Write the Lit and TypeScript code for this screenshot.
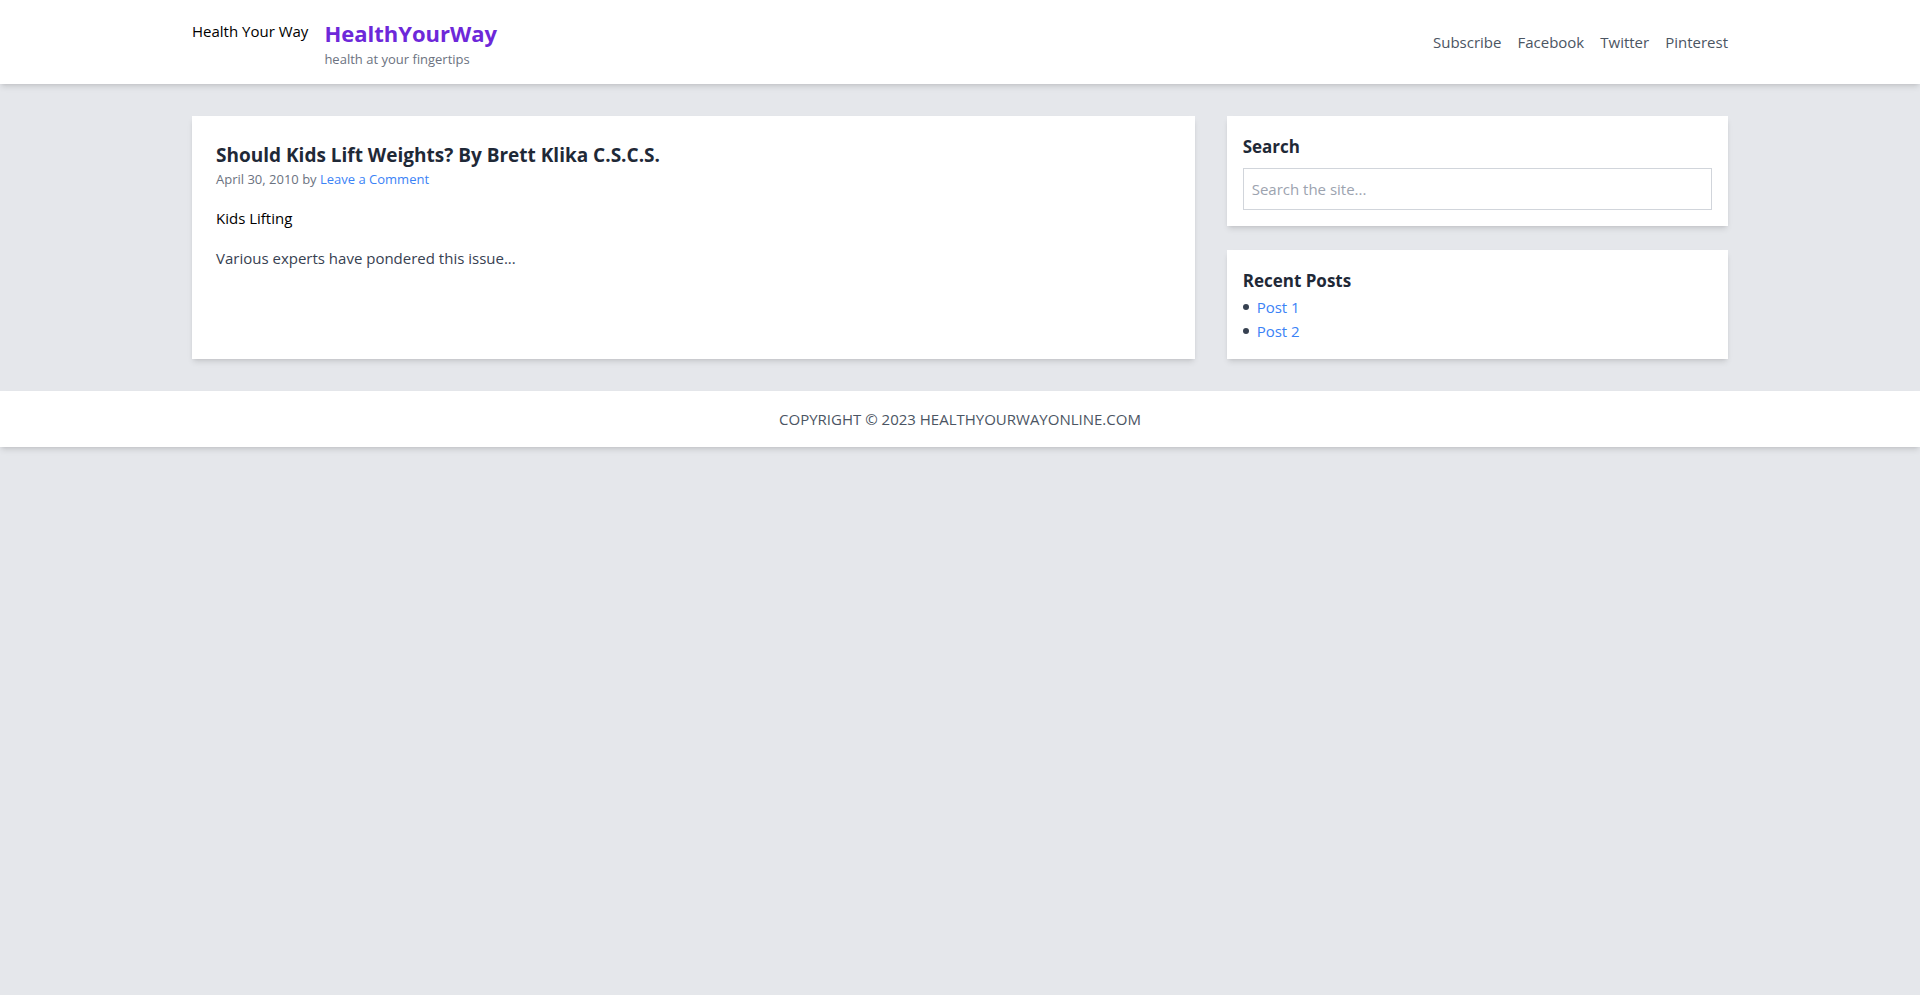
import { LitElement, html, css } from "lit";
import { customElement } from "lit/decorators.js";

interface NavItem {
  label: string;
  href: string;
}

const NAV: NavItem[] = [
  { label: "Subscribe", href: "#subscribe" },
  { label: "Facebook", href: "#facebook" },
  { label: "Twitter", href: "#twitter" },
  { label: "Pinterest", href: "#pinterest" },
];

const POSTS: NavItem[] = [
  { label: "Post 1", href: "#post-1" },
  { label: "Post 2", href: "#post-2" },
];

@customElement("app-root")
export class AppRoot extends LitElement {
  static styles = css`
    :host {
      display: block;
      min-height: 100vh;
      background: #e5e7eb;
      color: #000;
      font-family: "Segoe UI", "Open Sans", "Noto Sans", sans-serif;
      font-size: 15px;
      line-height: 24px;
    }
    *,
    *::before {
      box-sizing: border-box;
    }
    h1,
    h2,
    h3,
    p,
    ul {
      margin: 0;
      padding: 0;
    }
    a {
      color: #3b82f6;
      text-decoration: none;
    }
    .bar,
    .card {
      background: #fff;
      box-shadow: 0 4px 6px -1px rgb(0 0 0 / 0.1),
        0 2px 4px -2px rgb(0 0 0 / 0.1);
    }
    .bar {
      padding: 16px 0;
    }
    .container {
      width: 100%;
      max-width: 1536px;
      margin: 0 auto;
    }
    .top {
      display: flex;
      align-items: center;
      justify-content: space-between;
    }
    .brand,
    .nav {
      display: flex;
      gap: 16px;
    }
    .logo {
      line-height: 30px;
    }
    .site {
      color: #6d28d9;
      font-size: 22px;
      line-height: 34px;
      font-weight: 700;
    }
    .tagline,
    .meta {
      color: #6b7280;
      font-size: 13px;
      line-height: 18px;
    }
    .nav a {
      color: #4b5563;
    }
    .columns {
      display: grid;
      grid-template-columns: 2fr 1fr;
      gap: 32px;
      padding: 32px 0;
    }
    .article {
      padding: 24px;
    }
    .title {
      color: #1f2937;
      font-size: 19px;
      line-height: 30px;
      font-weight: 700;
    }
    .picture {
      margin-top: 18px;
    }
    .excerpt {
      margin-top: 16px;
      color: #374151;
    }
    .side {
      display: flex;
      flex-direction: column;
      gap: 24px;
    }
    .widget {
      padding: 16px;
    }
    .heading {
      display: block;
      color: #1f2937;
      font-size: 17px;
      line-height: 29px;
      font-weight: 700;
    }
    .search {
      display: block;
      width: 100%;
      margin-top: 7px;
      padding: 8px;
      border: 1px solid #d1d5db;
      border-radius: 0;
      background: #fff;
      color: #000;
      font: inherit;
      height: 42px;
    }
    .search::placeholder {
      color: #9ca3af;
      opacity: 1;
    }
    .posts {
      color: #374151;
      list-style: none;
    }
    .posts li {
      display: flex;
      align-items: center;
      gap: 8px;
    }
    .posts li::before {
      content: "";
      width: 6px;
      height: 6px;
      border-radius: 50%;
      background: currentColor;
    }
    .footer {
      color: #4b5563;
      text-align: center;
    }
  `;

  render() {
    return html`
      <header class="bar">
        <div class="container top">
          <div class="brand">
            <span class="logo">Health Your Way</span>
            <div>
              <h1 class="site">HealthYourWay</h1>
              <p class="tagline">health at your fingertips</p>
            </div>
          </div>
          <nav class="nav">
            ${NAV.map((n) => html`<a href=${n.href}>${n.label}</a>`)}
          </nav>
        </div>
      </header>
      <main class="container columns">
        <article class="card article">
          <h2 class="title">Should Kids Lift Weights? By Brett Klika C.S.C.S.</h2>
          <p class="meta">
            April 30, 2010 by <a href="#comment">Leave a Comment</a>
          </p>
          <p class="picture">Kids Lifting</p>
          <p class="excerpt">Various experts have pondered this issue...</p>
        </article>
        <aside class="side">
          <section class="card widget">
            <h3><label class="heading" for="search">Search</label></h3>
            <input
              class="search"
              id="search"
              type="text"
              placeholder="Search the site..."
            />
          </section>
          <section class="card widget">
            <h3 class="heading">Recent Posts</h3>
            <ul class="posts">
              ${POSTS.map((p) => html`<li><a href=${p.href}>${p.label}</a></li>`)}
            </ul>
          </section>
        </aside>
      </main>
      <footer class="bar footer">
        <p>COPYRIGHT © 2023 HEALTHYOURWAYONLINE.COM</p>
      </footer>
    `;
  }
}
